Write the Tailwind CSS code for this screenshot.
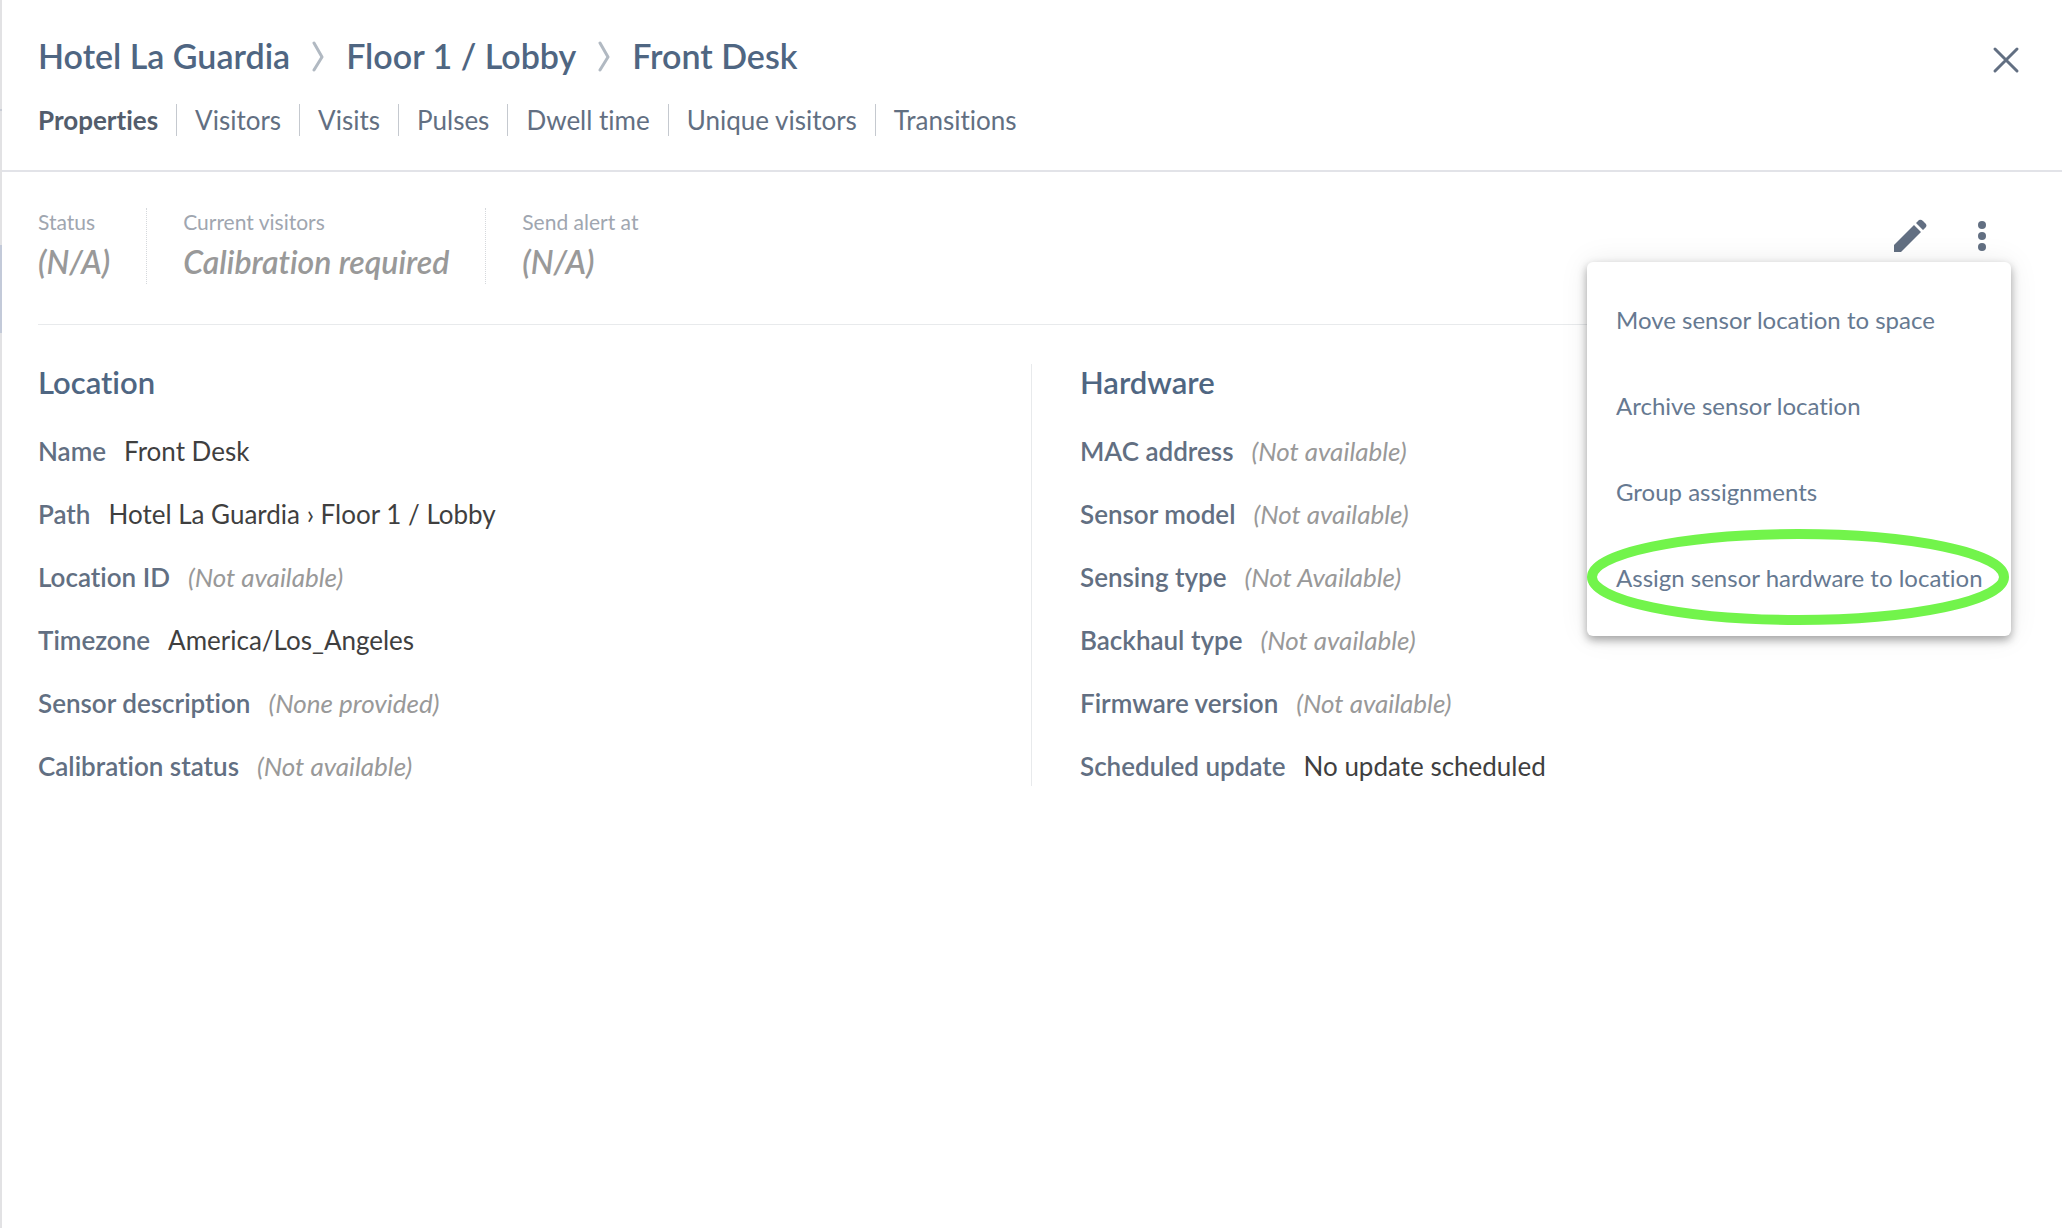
<!DOCTYPE html>
<html lang="en">
<head>
    <meta charset="UTF-8">
    <title>Front Desk - Properties</title>
    <meta name="viewport" content="width=device-width, initial-scale=1.0">
    <script src="https://cdn.jsdelivr.net/npm/@tailwindcss/browser@4"></script>
</head>
<body class="bg-white min-h-screen flex font-['Lato','Open_Sans',sans-serif] [font-variant-ligatures:none] text-[26px] leading-8 text-[#626f82]">

<!-- Edge of the page behind the panel -->
<div class="w-[2px] shrink-0 bg-[#e2e2e4] flex flex-col">
    <div class="mt-[109px] h-[2px] bg-[#c9cdd6]"></div>
    <div class="mt-[134px] h-[88px] bg-[#c3cad9]"></div>
</div>

<div class="flex-grow">
    <!-- Header -->
    <header class="flex justify-between items-start pl-9 pr-9 border-b-2 border-[#e2e3e8]">
        <div>
            <nav aria-label="Breadcrumb" class="flex items-center gap-[22px] pt-[34px] text-[34px] leading-[44px] font-semibold text-[#4f6682]">
                <a href="#">Hotel La Guardia</a>
                <svg class="w-3 h-8" viewBox="0 0 12 32" fill="none" stroke="#b1b9c2" stroke-width="3" stroke-linecap="round" stroke-linejoin="round"><path d="M2 3l8 14-8 13"/></svg>
                <a href="#">Floor 1 / Lobby</a>
                <svg class="w-3 h-8" viewBox="0 0 12 32" fill="none" stroke="#b1b9c2" stroke-width="3" stroke-linecap="round" stroke-linejoin="round"><path d="M2 3l8 14-8 13"/></svg>
                <a href="#" aria-current="page">Front Desk</a>
            </nav>
            <nav aria-label="Sections" class="flex mt-[26px] mb-[34px] divide-x divide-[#c5c9cf]">
                <a href="#" class="pr-[18px] font-bold text-[#535d6c]">Properties</a>
                <a href="#" class="px-[18px]">Visitors</a>
                <a href="#" class="px-[18px]">Visits</a>
                <a href="#" class="px-[18px]">Pulses</a>
                <a href="#" class="px-[18px]">Dwell time</a>
                <a href="#" class="px-[18px]">Unique visitors</a>
                <a href="#" class="px-[18px]">Transitions</a>
            </nav>
        </div>
        <button type="button" aria-label="Close" class="mt-10 p-1">
            <svg class="w-8 h-8" viewBox="0 0 32 32" fill="none" stroke="#626f82" stroke-width="3" stroke-linecap="round"><path d="M5 5l22 22M27 5L5 27"/></svg>
        </button>
    </header>

    <main class="px-9">
        <!-- Status row -->
        <div class="relative mr-6 flex justify-between pt-9 pb-10 border-b border-[#e8eaec]">
            <dl class="flex divide-x divide-dotted divide-[#d5d8dc]">
                <div class="pr-9">
                    <dt class="text-[21px] leading-7 text-[#a0a6b0]">Status</dt>
                    <dd class="pt-1.5 pb-0.5 text-[32px] leading-10 font-semibold italic text-[#999]">(N/A)</dd>
                </div>
                <div class="px-9">
                    <dt class="text-[21px] leading-7 text-[#a0a6b0]">Current visitors</dt>
                    <dd class="pt-1.5 pb-0.5 text-[32px] leading-10 font-semibold italic text-[#999]">Calibration required</dd>
                </div>
                <div class="px-9">
                    <dt class="text-[21px] leading-7 text-[#a0a6b0]">Send alert at</dt>
                    <dd class="pt-1.5 pb-0.5 text-[32px] leading-10 font-semibold italic text-[#999]">(N/A)</dd>
                </div>
            </dl>
            <div class="flex items-start gap-8 pt-2">
                <button type="button" aria-label="Edit">
                    <svg class="w-10 h-10" viewBox="0 0 40 40" fill="#626f82"><path d="M4 29L24 9l7 7-20 20H4zM26 7l3-3q2-1 4 1l3 3q1 2 0 3l-3 3z"/></svg>
                </button>
                <button type="button" aria-label="More actions" aria-expanded="true">
                    <svg class="w-10 h-10" viewBox="0 0 40 40" fill="#626f82"><circle cx="20" cy="9" r="4"/><circle cx="20" cy="20" r="4"/><circle cx="20" cy="31" r="4"/></svg>
                </button>
            </div>

            <!-- Actions menu -->
            <div role="menu" class="absolute z-10 -right-[9px] top-[90px] w-[424px] py-[15px] rounded-md bg-white shadow-[0_4px_10px_rgba(0,0,0,0.35),0_0_30px_rgba(0,0,0,0.08)] flex flex-col text-[24px] text-[#667991]">
                <button type="button" role="menuitem" class="h-[86px] px-[29px] text-left whitespace-nowrap">Move sensor location to space</button>
                <button type="button" role="menuitem" class="h-[86px] px-[29px] text-left whitespace-nowrap">Archive sensor location</button>
                <button type="button" role="menuitem" class="h-[86px] px-[29px] text-left whitespace-nowrap">Group assignments</button>
                <button type="button" role="menuitem" class="relative h-[86px] px-[29px] text-left whitespace-nowrap">
                    Assign sensor hardware to location
                    <svg class="absolute left-0 -top-1.5 w-[422px] h-24" viewBox="0 0 422 96" fill="none" stroke="#72f44b" stroke-width="10"><ellipse cx="211" cy="48" rx="206" ry="43"/></svg>
                </button>
            </div>
        </div>

        <!-- Details -->
        <div class="grid grid-cols-2 pt-[39px]">
            <section class="border-r border-[#e8eaec] pb-1">
                <h2 class="text-[31px] leading-9 font-semibold text-[#4f6682]">Location</h2>
                <dl class="mt-[35px] flex flex-col gap-[31px]">
                    <div class="flex gap-[18px]"><dt class="font-semibold">Name</dt><dd class="text-[#3f3f3f]">Front Desk</dd></div>
                    <div class="flex gap-[18px]"><dt class="font-semibold">Path</dt><dd class="text-[#3f3f3f]">Hotel La Guardia › Floor 1 / Lobby</dd></div>
                    <div class="flex gap-[18px]"><dt class="font-semibold">Location ID</dt><dd class="italic text-[#999]">(Not available)</dd></div>
                    <div class="flex gap-[18px]"><dt class="font-semibold">Timezone</dt><dd class="text-[#3f3f3f]">America/Los_Angeles</dd></div>
                    <div class="flex gap-[18px]"><dt class="font-semibold">Sensor description</dt><dd class="italic text-[#999]">(None provided)</dd></div>
                    <div class="flex gap-[18px]"><dt class="font-semibold">Calibration status</dt><dd class="italic text-[#999]">(Not available)</dd></div>
                </dl>
            </section>
            <section class="pl-12">
                <h2 class="text-[31px] leading-9 font-semibold text-[#4f6682]">Hardware</h2>
                <dl class="mt-[35px] flex flex-col gap-[31px]">
                    <div class="flex gap-[18px]"><dt class="font-semibold">MAC address</dt><dd class="italic text-[#999]">(Not available)</dd></div>
                    <div class="flex gap-[18px]"><dt class="font-semibold">Sensor model</dt><dd class="italic text-[#999]">(Not available)</dd></div>
                    <div class="flex gap-[18px]"><dt class="font-semibold">Sensing type</dt><dd class="italic text-[#999]">(Not Available)</dd></div>
                    <div class="flex gap-[18px]"><dt class="font-semibold">Backhaul type</dt><dd class="italic text-[#999]">(Not available)</dd></div>
                    <div class="flex gap-[18px]"><dt class="font-semibold">Firmware version</dt><dd class="italic text-[#999]">(Not available)</dd></div>
                    <div class="flex gap-[18px]"><dt class="font-semibold">Scheduled update</dt><dd class="text-[#3f3f3f]">No update scheduled</dd></div>
                </dl>
            </section>
        </div>
    </main>
</div>

</body>
</html>
